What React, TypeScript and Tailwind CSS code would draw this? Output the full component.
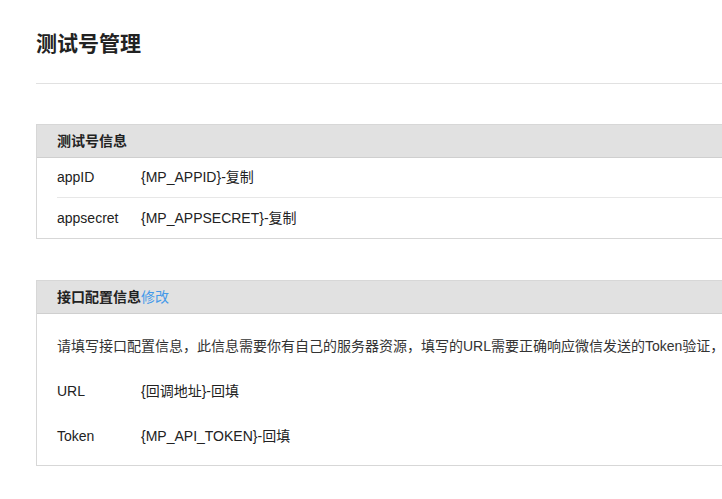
export default function App() {
  return (
    <div className="overflow-hidden bg-white font-['Liberation_Sans','Noto_Sans_CJK_SC',sans-serif] text-[#222]">
      <div className="w-[920px] pl-[36px]">
        <div className="border-b border-[#e1e1e1] pt-[30px] pb-[25px]">
          <h1 className="text-[21px] leading-[28px] font-bold">测试号管理</h1>
        </div>

        <div className="mt-[40px] border border-[#d7d7d7]">
          <div className="h-[33px] border-b border-[#cfcfcf] bg-[#e1e1e1] px-[20px] text-[14px] leading-[32px] font-bold">
            测试号信息
          </div>
          <div className="pl-[20px] text-[14px]">
            <div className="flex h-[40px] items-center border-b border-[#e7e7e7]">
              <span className="w-[84px]">appID</span>
              <span>{'{MP_APPID}'}-复制</span>
            </div>
            <div className="flex h-[40px] items-center">
              <span className="w-[84px]">appsecret</span>
              <span>{'{MP_APPSECRET}'}-复制</span>
            </div>
          </div>
        </div>

        <div className="mt-[41px] border border-[#d7d7d7]">
          <div className="h-[33px] border-b border-[#cfcfcf] bg-[#e1e1e1] px-[20px] text-[14px] leading-[32px] font-bold">
            接口配置信息<a className="font-normal text-[#459ae9]">修改</a>
          </div>
          <div className="flex flex-col gap-[25px] px-[20px] pt-[22px] pb-[19px] text-[14px] leading-[20px]">
            <p className="text-[#333]">
              请填写接口配置信息，此信息需要你有自己的服务器资源，填写的URL需要正确响应微信发送的Token验证，
            </p>
            <div className="flex">
              <span className="w-[84px]">URL</span>
              <span>{'{回调地址}'}-回填</span>
            </div>
            <div className="flex">
              <span className="w-[84px]">Token</span>
              <span>{'{MP_API_TOKEN}'}-回填</span>
            </div>
          </div>
        </div>
      </div>
    </div>
  )
}
